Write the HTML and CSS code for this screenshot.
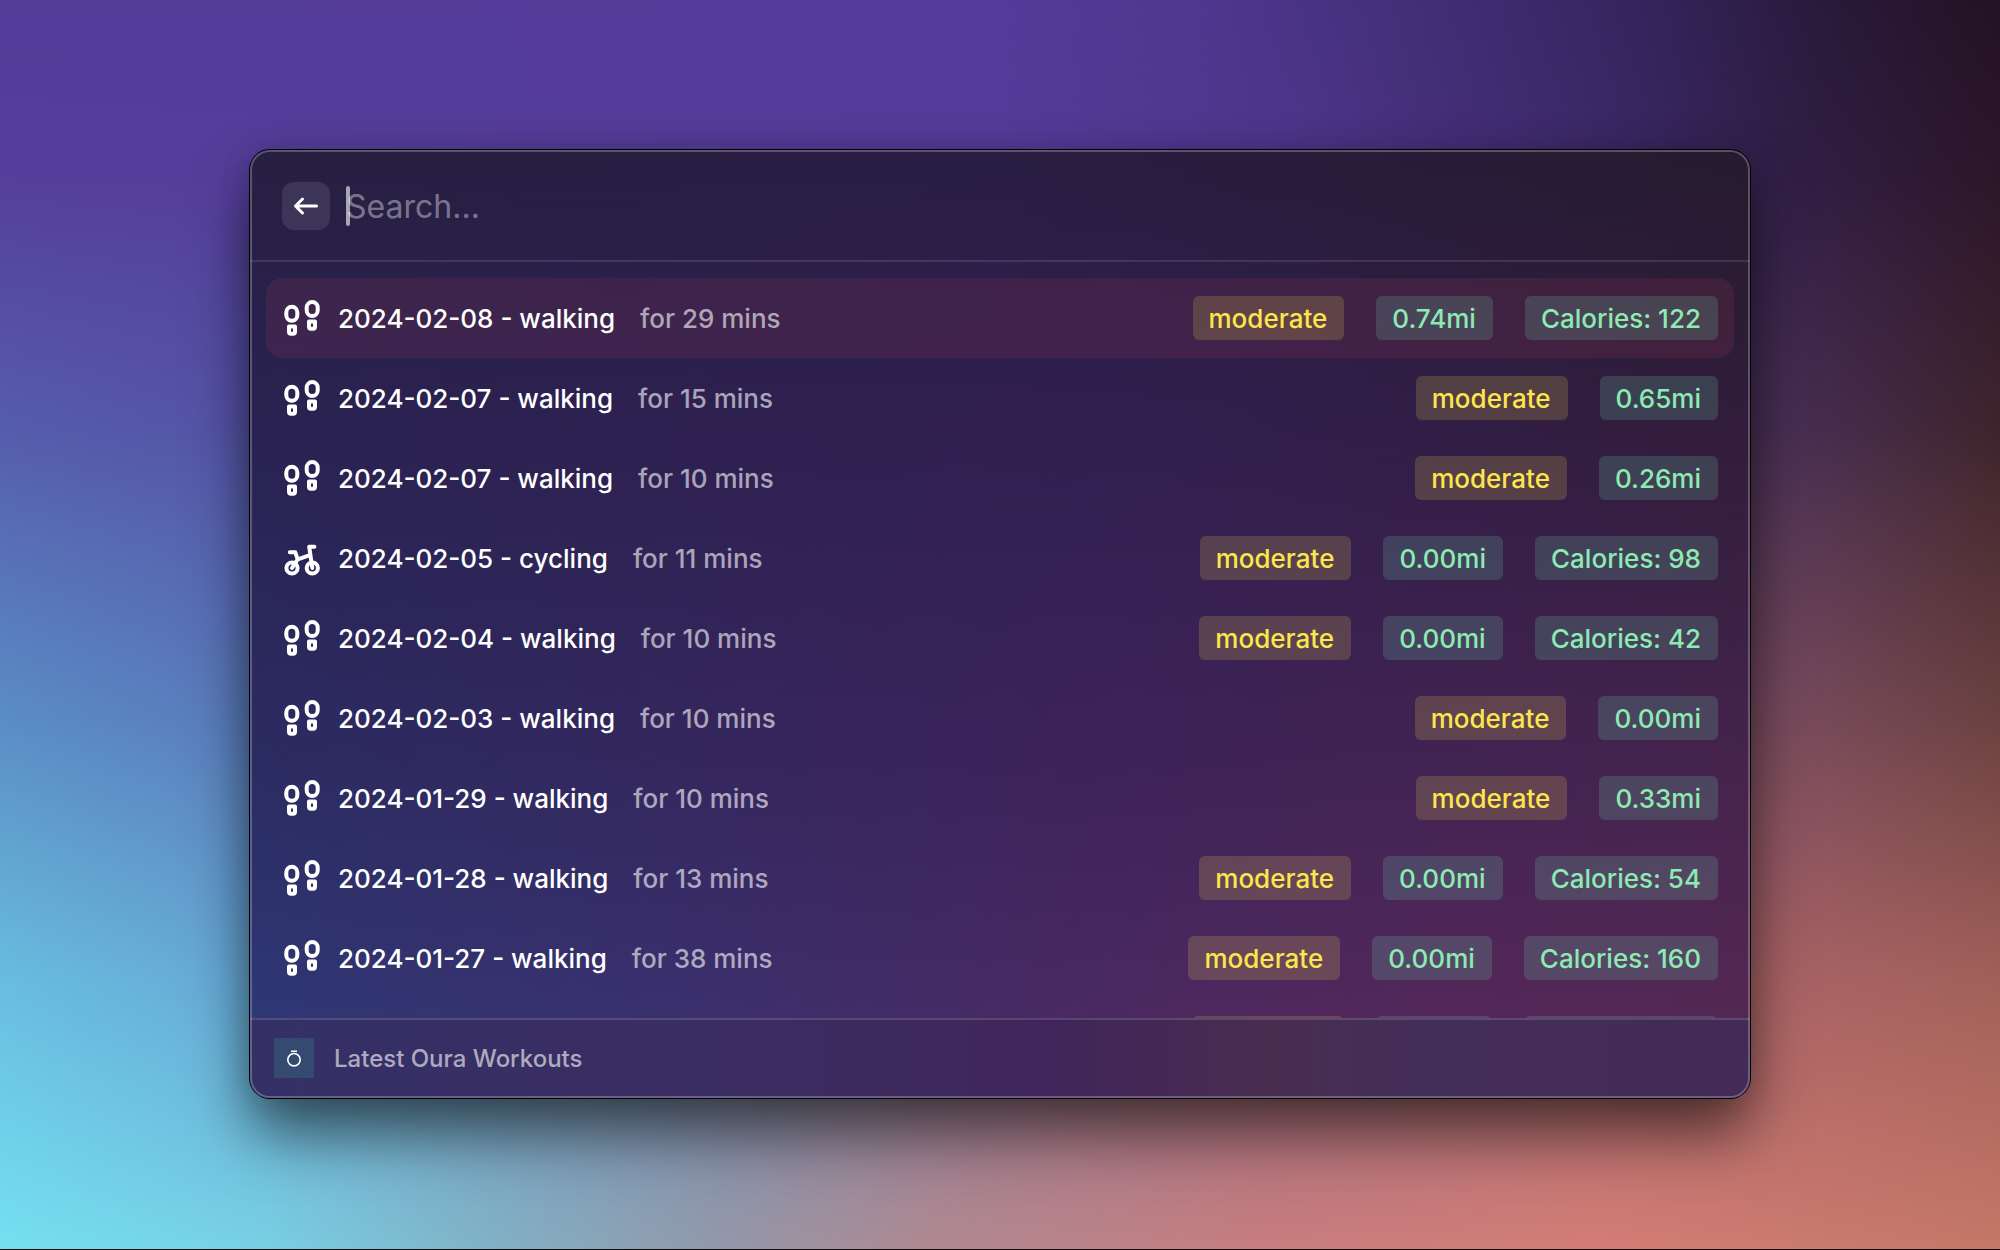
FILE: index.html
```
<!DOCTYPE html>
<html lang="en"><head><meta charset="utf-8"><title>Latest Oura Workouts</title><link rel="stylesheet" href="styles.css"></head>
<body>
<main class="desktop">
  <div class="wall wall-1"></div><div class="wall wall-2"></div><div class="wall wall-3"></div><div class="wall wall-4"></div><div class="wall wall-5"></div><div class="wall wall-6"></div>
  <section class="window">
    <div class="tint tint-1"></div><div class="tint tint-2"></div><div class="tint tint-3"></div><div class="tint tint-4"></div>
    <header class="search">
      <button class="back" aria-label="Back"><svg width="48" height="48" viewBox="0 0 48 48"><path d="M34.5 24H13.5M20.5 17l-7 7 7 7"/></svg></button>
      <div class="field"><span class="caret"></span><span class="placeholder">Search...</span></div>
    </header>
    <ul class="list" id="list"></ul>
    <footer class="footer">
      <svg class="logo" width="40" height="40" viewBox="0 0 40 40"><rect width="40" height="40"/><circle cx="20" cy="21.7" r="6.2"/><path d="M17 13.2h6"/></svg>
      <span>Latest Oura Workouts</span>
    </footer>
    <div class="edge"></div>
  </section>
</main>
<script src="app.js"></script>
</body></html>
```
FILE: app.js
```
const workouts = [
  ["2024-02-08", "walking", 29, "0.74", 122],
  ["2024-02-07", "walking", 15, "0.65"],
  ["2024-02-07", "walking", 10, "0.26"],
  ["2024-02-05", "cycling", 11, "0.00", 98],
  ["2024-02-04", "walking", 10, "0.00", 42],
  ["2024-02-03", "walking", 10, "0.00"],
  ["2024-01-29", "walking", 10, "0.33"],
  ["2024-01-28", "walking", 13, "0.00", 54],
  ["2024-01-27", "walking", 38, "0.00", 160],
];
const icons = {
  walking: '<rect x="4.3" y="7.7" width="11" height="14" rx="5.5"/><path d="M7 27.4h6v5.3a2 2 0 0 1-2 2h-2a2 2 0 0 1-2-2z"/><rect x="24.7" y="3" width="11" height="14" rx="5.5"/><path d="M27 22.6h6v5.1a2 2 0 0 1-2 2h-2a2 2 0 0 1-2-2z"/>',
  cycling: '<circle cx="10" cy="29" r="5.6"/><circle cx="30.3" cy="29" r="5.6"/><path d="M7.8 13.3h5.5l2.4 7L10 29M15.7 20.3L28 16.2M30.3 29L27.2 7.7h5.2"/>',
};
document.getElementById("list").innerHTML = workouts.map(([date, kind, mins, miles, kcal], i) => `
  <li class="row${i === 0 ? " selected" : ""}">
    <svg class="icon" width="38" height="38" viewBox="0 0 38 38">${icons[kind]}</svg>
    <span class="title">${date} - ${kind}</span>
    <span class="subtitle">for ${mins} mins</span>
    <span class="tag yellow">moderate</span>
    <span class="tag green">${miles}mi</span>
    ${kcal ? `<span class="tag green">Calories: ${kcal}</span>` : ""}
  </li>`).join("") + `
  <li class="row">
    <span class="tag yellow peek peek-level"></span>
    <span class="tag green peek peek-distance"></span>
    <span class="tag green peek peek-calories"></span>
  </li>`;
```
FILE: styles.css
```
* { box-sizing: border-box; }
body { margin: 0; font-family: Inter, sans-serif; }
.desktop { position: relative; width: 2000px; height: 1250px; padding: 150px 250px; overflow: hidden; }
.wall { position: absolute; inset: 0; }
.wall-1 { background: linear-gradient(90deg, #533c99 0, #553b9a 50%, #50378f 60%, #43307a 70%, #34255e 82%, #2a1a3c 91%, #241224 100%); }
.wall-2 { background: linear-gradient(90deg, #553f9c 0, #553b99 50%, #4e3589 65%, #3a2762 82%, #321f47 89%, #2c172a 100%); mask: linear-gradient(transparent 0, #000 14%); }
.wall-3 { background: linear-gradient(90deg, #565cad 0, #5553a6 12%, #553b80 50%, #472e52 90%, #3e242c 100%); mask: linear-gradient(transparent 14%, #000 34%); }
.wall-4 { background: linear-gradient(90deg, #5a8cc4 0, #5a7bbb 12%, #6b5590 50%, #774a5c 90%, #6a4140 100%); mask: linear-gradient(transparent 34%, #000 57%); }
.wall-5 { background: linear-gradient(90deg, #69bee0 0, #67aad6 12%, #7590b5 32%, #9a7088 55%, #ab6467 88%, #a3615a 100%); mask: linear-gradient(transparent 57%, #000 79%); }
.wall-6 { border-bottom: 1px solid #14100f; background: linear-gradient(90deg, #75e0f1 0, #78d0e4 13%, #82b0c4 25%, #9398aa 36%, #b08890 47%, #c77d7f 63%, #d37d75 80%, #c47868 100%); mask: linear-gradient(transparent 79%, #000 100%); }
.window { position: relative; z-index: 2; display: flex; flex-direction: column; width: 1500px; height: 948px; border-radius: 20px; overflow: clip; }
.desktop::before { content: ""; position: absolute; left: 250px; top: 150px; width: 1500px; height: 948px; z-index: 1; border-radius: 20px; box-shadow: 0 0 0 1px #000, 0 36px 60px rgba(0,0,0,.56), 0 0 30px rgba(0,0,0,.15); }
.tint { position: absolute; inset: 0; }
.tint-1 { background: linear-gradient(90deg, #281f42, #291e43 50%, #261b2f); }
.tint-2 { background: linear-gradient(90deg, #2a2352, #321f50 60%, #321d3b); mask: linear-gradient(transparent 0, #000 30%); }
.tint-3 { background: linear-gradient(90deg, #2b2c62, #3d235a 55%, #45244c); mask: linear-gradient(transparent 30%, #000 64%); }
.tint-4 { background: linear-gradient(90deg, #2f3875, #3b306e 30%, #4a2a62 55%, #54285a 80%, #542853); mask: linear-gradient(transparent 64%, #000 92%); }
.edge { position: absolute; inset: 0; border: 2px solid rgba(255,255,255,.24); border-radius: 20px; }
.search { position: relative; display: flex; align-items: center; gap: 16px; flex: none; height: 112px; padding: 2px 32px 0; border-bottom: 2px solid rgba(255,255,255,.11); }
.back { width: 48px; height: 48px; padding: 0; border: 0; border-radius: 12px; background: rgba(255,255,255,.1); }
.back svg { display: block; fill: none; stroke: #fff; stroke-width: 3; stroke-linecap: round; stroke-linejoin: round; }
.field { display: flex; align-items: center; font-size: 32px; color: rgba(255,255,255,.4); }
.caret { width: 4px; height: 40px; margin-right: -4px; border-radius: 2px; background: rgba(255,255,255,.6); }
.list { position: relative; flex: 1; min-height: 0; margin: 0; padding: 16px; list-style: none; overflow: hidden; }
.row { display: flex; align-items: center; height: 80px; padding: 0 16px; border-radius: 16px; font-size: 26px; font-weight: 500; white-space: nowrap; }
.selected { background: rgba(160,60,90,.17); }
.icon { flex: none; margin-right: 18px; fill: none; stroke: #fff; stroke-width: 4; stroke-linecap: round; stroke-linejoin: round; }
.title { color: #fff; }
.subtitle { margin: 0 auto 0 25px; color: rgba(255,255,255,.6); }
.tag { height: 44px; margin-left: 32px; padding: 0 17px 0 16px; border-radius: 6px; line-height: 45px; letter-spacing: .01px; }
.yellow { color: #fde64c; background: rgba(253,230,76,.17); }
.green { color: #8debb1; background: rgba(120,235,190,.17); }
.peek-level { width: 152px; margin-left: auto; }
.peek-distance { width: 116px; }
.peek-calories { width: 194px; }
.footer { position: relative; display: flex; align-items: center; gap: 20px; flex: none; height: 80px; padding: 0 24px 2px; border-top: 2px solid rgba(255,255,255,.14); background: linear-gradient(90deg, #343066, #3b2d62 33%, #40255a 54%, #482d50 68%, #432e58 78%, #432a57); font-size: 24px; font-weight: 500; color: rgba(255,255,255,.6); }
.logo { fill: none; stroke: #fff; stroke-width: 1.6; }
.logo rect { fill: #344a70; stroke: none; }
```
